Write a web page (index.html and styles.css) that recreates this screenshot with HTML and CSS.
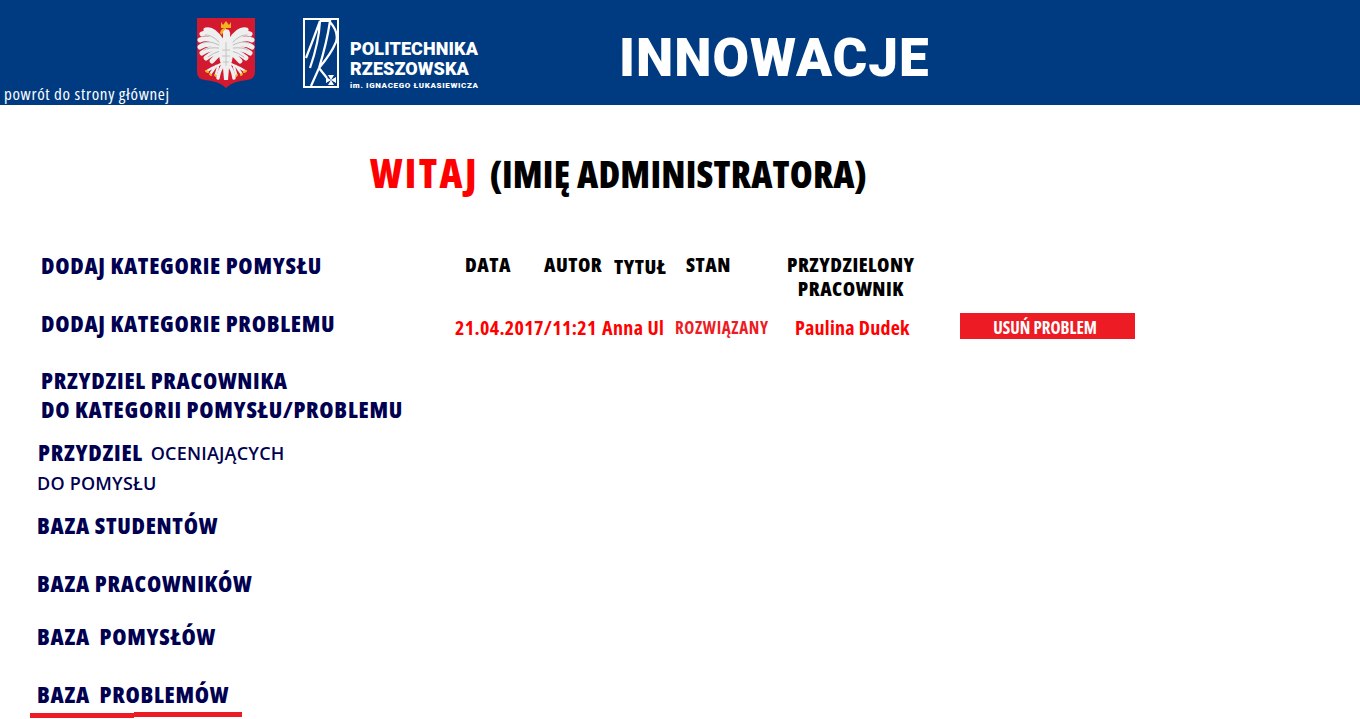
FILE: index.html
```html
<!DOCTYPE html>
<html lang="pl">
<head>
  <meta charset="utf-8">
  <title>Innowacje</title>
  <link rel="stylesheet" href="styles.css">
</head>
<body>
  <header class="top-bar">
    <a class="back-link" href="#">powrót do strony głównej</a>
    <svg class="eagle" viewBox="0 0 58 70" aria-hidden="true">
      <path d="M0 0H58V54Q58 61 50 62Q36 63 29 70Q22 63 8 62Q0 61 0 54Z" fill="#d3192f"/>
      <path d="M24 4L26 7L29 3L32 7L34 4V10H24Z" fill="#f2b51d"/>
      <path d="M23 15Q24 10 29 10V14Q26 13 25 17Z" fill="#f2b51d"/>
      <g id="wing" fill="none" stroke-linecap="round">
        <g stroke="#efefef" stroke-width="5">
          <path d="M24 22Q16 10 9 12"/>
          <path d="M24 24Q12 13 5 16"/>
          <path d="M24 26Q10 18 3 22"/>
          <path d="M24 28Q10 24 3 29"/>
          <path d="M24 30Q12 30 5 35"/>
          <path d="M25 32Q15 35 9 40"/>
          <path d="M25 34Q19 38 15 43"/>
        </g>
        <path d="M22 24Q14 16 8 17M22 27Q12 22 6 25M22 30Q12 29 7 32M23 33Q16 35 11 39" stroke="#bcbcbc" stroke-width="1"/>
        <path d="M24 46L15 50L10 53M19 48L14 55M21 49L19 56" stroke="#efefef" stroke-width="2.4"/>
        <path d="M9 53L11 54M13 56L14 57M18 57L19 58" stroke="#f2b51d" stroke-width="2"/>
        <path d="M27 46Q22 52 21 60" stroke="#efefef" stroke-width="3.5"/>
      </g>
      <use href="#wing" transform="matrix(-1 0 0 1 58 0)"/>
      <path d="M26 14Q28 10 32 12Q34 15 33 19Q36 24 36 34Q36 44 32 50L31 62H27L26 50Q22 44 22 34Q22 25 26 21Z" fill="#efefef"/>
      <path d="M29 24V48M25 32H33M25 38H33M26 44H32" stroke="#c4c4c4" stroke-width="1" fill="none"/>
    </svg>
    <svg class="pr-mark" viewBox="0 0 36 70" aria-hidden="true">
      <rect x="1" y="1" width="34" height="68" fill="none" stroke="#fff" stroke-width="2"/>
      <path d="M3 40Q10 22 17 3Q16 24 7 50M17 3H27Q24 24 16 50M27 4Q36 14 33 24Q28 36 16 50L8 68M16 50L24 60" fill="none" stroke="#fff" stroke-width="2.2"/>
      <path d="M28 62L25 57H31ZM28 62L25 67H31ZM28 62L23 59V65ZM28 62L33 59V65Z" fill="#fff"/>
    </svg>
    <div class="school-name">
      <span>POLITECHNIKA</span>
      <span>RZESZOWSKA</span>
      <small>im. IGNACEGO ŁUKASIEWICZA</small>
    </div>
    <div class="app-name">INNOWACJE</div>
  </header>

  <h1 class="welcome"><span class="welcome-red">WITAJ</span> (IMIĘ ADMINISTRATORA)</h1>

  <main class="content">
    <nav class="side-menu">
      <a class="menu-item item-kat1" href="#">DODAJ KATEGORIE POMYSŁU</a>
      <a class="menu-item item-kat2" href="#">DODAJ KATEGORIE PROBLEMU</a>
      <a class="menu-item item-prac" href="#">PRZYDZIEL PRACOWNIKA<br>DO KATEGORII POMYSŁU/PROBLEMU</a>
      <a class="menu-item item-ocen" href="#">PRZYDZIEL <span class="plain plain-first">OCENIAJĄCYCH</span><br><span class="plain plain-second">DO POMYSŁU</span></a>
      <a class="menu-item item-stud" href="#">BAZA STUDENTÓW</a>
      <a class="menu-item item-bprac" href="#">BAZA PRACOWNIKÓW</a>
      <a class="menu-item item-pom" href="#">BAZA&nbsp; POMYSŁÓW</a>
      <a class="menu-item item-prob" href="#">BAZA&nbsp; PROBLEMÓW</a>
      <div class="menu-line">
        <div class="line-left"></div>
        <div class="line-right"></div>
      </div>
    </nav>

    <section class="problems">
      <div class="head-row">
        <div class="head-data">DATA</div>
        <div class="head-autor">AUTOR</div>
        <div class="head-tytul">TYTUŁ</div>
        <div class="head-stan">STAN</div>
        <div class="head-prac">PRZYDZIELONY<br>PRACOWNIK</div>
      </div>
      <div class="data-row">
        <div class="cell-data">21.04.2017/11:21</div>
        <div class="cell-autor">Anna Ul</div>
        <div class="cell-stan">ROZWIĄZANY</div>
        <div class="cell-prac">Paulina Dudek</div>
        <button class="delete-btn">USUŃ PROBLEM</button>
      </div>
    </section>
  </main>
</body>
</html>
```

FILE: styles.css
```css
body {
  margin: 0;
  background-color: #fff;
  font-family: "Open Sans", "Liberation Sans", Arial, sans-serif;
  font-stretch: 75%;
  font-weight: bold;
  overflow: hidden;
}

a {
  color: inherit;
  text-decoration: none;
}

/* top bar */
.top-bar {
  display: flex;
  align-items: flex-start;
  height: 105px;
  background-color: #003b82;
  color: #fff;
}

.back-link {
  width: 197px;
  margin-top: 84px;
  padding-left: 4px;
  box-sizing: border-box;
  font-weight: normal;
  font-size: 17px;
  line-height: 20px;
  letter-spacing: 0.67px;
  white-space: nowrap;
}

.eagle {
  width: 58px;
  height: 70px;
  margin-top: 18px;
}

.pr-mark {
  width: 36px;
  height: 70px;
  margin-top: 18px;
  margin-left: 48px;
}

.school-name {
  width: 270px;
  margin-top: 39px;
  margin-left: 11px;
  font-family: Roboto, sans-serif;
  font-stretch: normal;
  font-weight: 900;
  font-size: 18px;
  line-height: 20px;
  letter-spacing: 0.1px;
}

.school-name span {
  display: block;
}

.school-name small {
  display: block;
  margin-top: 2px;
  font-size: 8px;
  line-height: 10px;
  letter-spacing: 0.65px;
}

.app-name {
  margin-top: 27px;
  margin-left: -1px;
  font-family: Roboto, sans-serif;
  font-stretch: normal;
  font-weight: 900;
  font-size: 53px;
  line-height: 62px;
  letter-spacing: 1px;
}

/* welcome line */
.welcome {
  margin: 45px 0 0 370px;
  font-size: 37px;
  line-height: 46px;
  font-weight: 800;
  letter-spacing: 0.2px;
  color: #000;
}

.welcome-red {
  margin-right: 4px;
  color: #f00;
  font-size: 40px;
  letter-spacing: 2.4px;
}

.content {
  display: flex;
  align-items: flex-start;
}

/* left menu */
.side-menu {
  display: flex;
  flex-direction: column;
  width: 440px;
  padding-top: 54px;
  color: #000050;
}

.menu-item {
  display: block;
  font-size: 23px;
  font-weight: 800;
  line-height: 29px;
  letter-spacing: 0.72px;
  white-space: nowrap;
}

.item-kat1 { margin-left: 41px; }
.item-kat2 { margin-left: 41px; margin-top: 29px; }
.item-prac { margin-left: 41px; margin-top: 28px; }
.item-ocen { margin-left: 38px; margin-top: 13px; line-height: 30px; height: 60px; }
.item-stud { margin-left: 37px; margin-top: 14px; }
.item-bprac { margin-left: 37px; margin-top: 29px; }
.item-pom { margin-left: 37px; margin-top: 24px; }
.item-prob { margin-left: 37px; margin-top: 29px; }

.plain {
  font-family: "Open Sans", sans-serif;
  font-stretch: normal;
  font-weight: 600;
  font-size: 18px;
  letter-spacing: 0.2px;
  position: relative;
}

.plain-first {
  top: -1px;
  margin-left: 3px;
}

.plain-second {
  top: -3px;
  margin-left: -1px;
}

.menu-line {
  display: flex;
  margin-left: 30px;
  margin-top: 3px;
}

.line-left {
  width: 104px;
  height: 5px;
  margin-top: 1px;
  background-color: #ed1c24;
}

.line-right {
  width: 108px;
  height: 5px;
  background-color: #ed1c24;
}

/* problem list */
.problems {
  padding-top: 56px;
  padding-left: 15px;
  font-size: 20px;
}

.head-row {
  display: flex;
  align-items: flex-start;
  color: #000;
  font-weight: 800;
  letter-spacing: 0.5px;
  line-height: 24px;
  height: 62px;
}

.head-row > div {
  white-space: nowrap;
}

.head-data { margin-left: 10px; width: 79px; }
.head-autor { width: 70px; }
.head-tytul { width: 72px; margin-top: 2px; }
.head-stan { width: 57px; }
.head-prac { margin-left: 44px; text-align: center; }

.data-row {
  display: flex;
  align-items: center;
  color: #f00;
  line-height: 26px;
  white-space: nowrap;
}

.cell-data { width: 147px; letter-spacing: 0.35px; }
.cell-autor { width: 73px; letter-spacing: 0.4px; }
.cell-stan { width: 120px; font-size: 17px; letter-spacing: 0.6px; color: #ed1c24; }
.cell-prac { width: 165px; letter-spacing: 0.25px; }

.delete-btn {
  width: 175px;
  height: 26px;
  margin-top: -4px;
  padding: 2px 5px 0 0;
  border: none;
  background-color: #ed1c24;
  color: #fff;
  font: inherit;
  font-size: 17px;
  cursor: pointer;
}
```
